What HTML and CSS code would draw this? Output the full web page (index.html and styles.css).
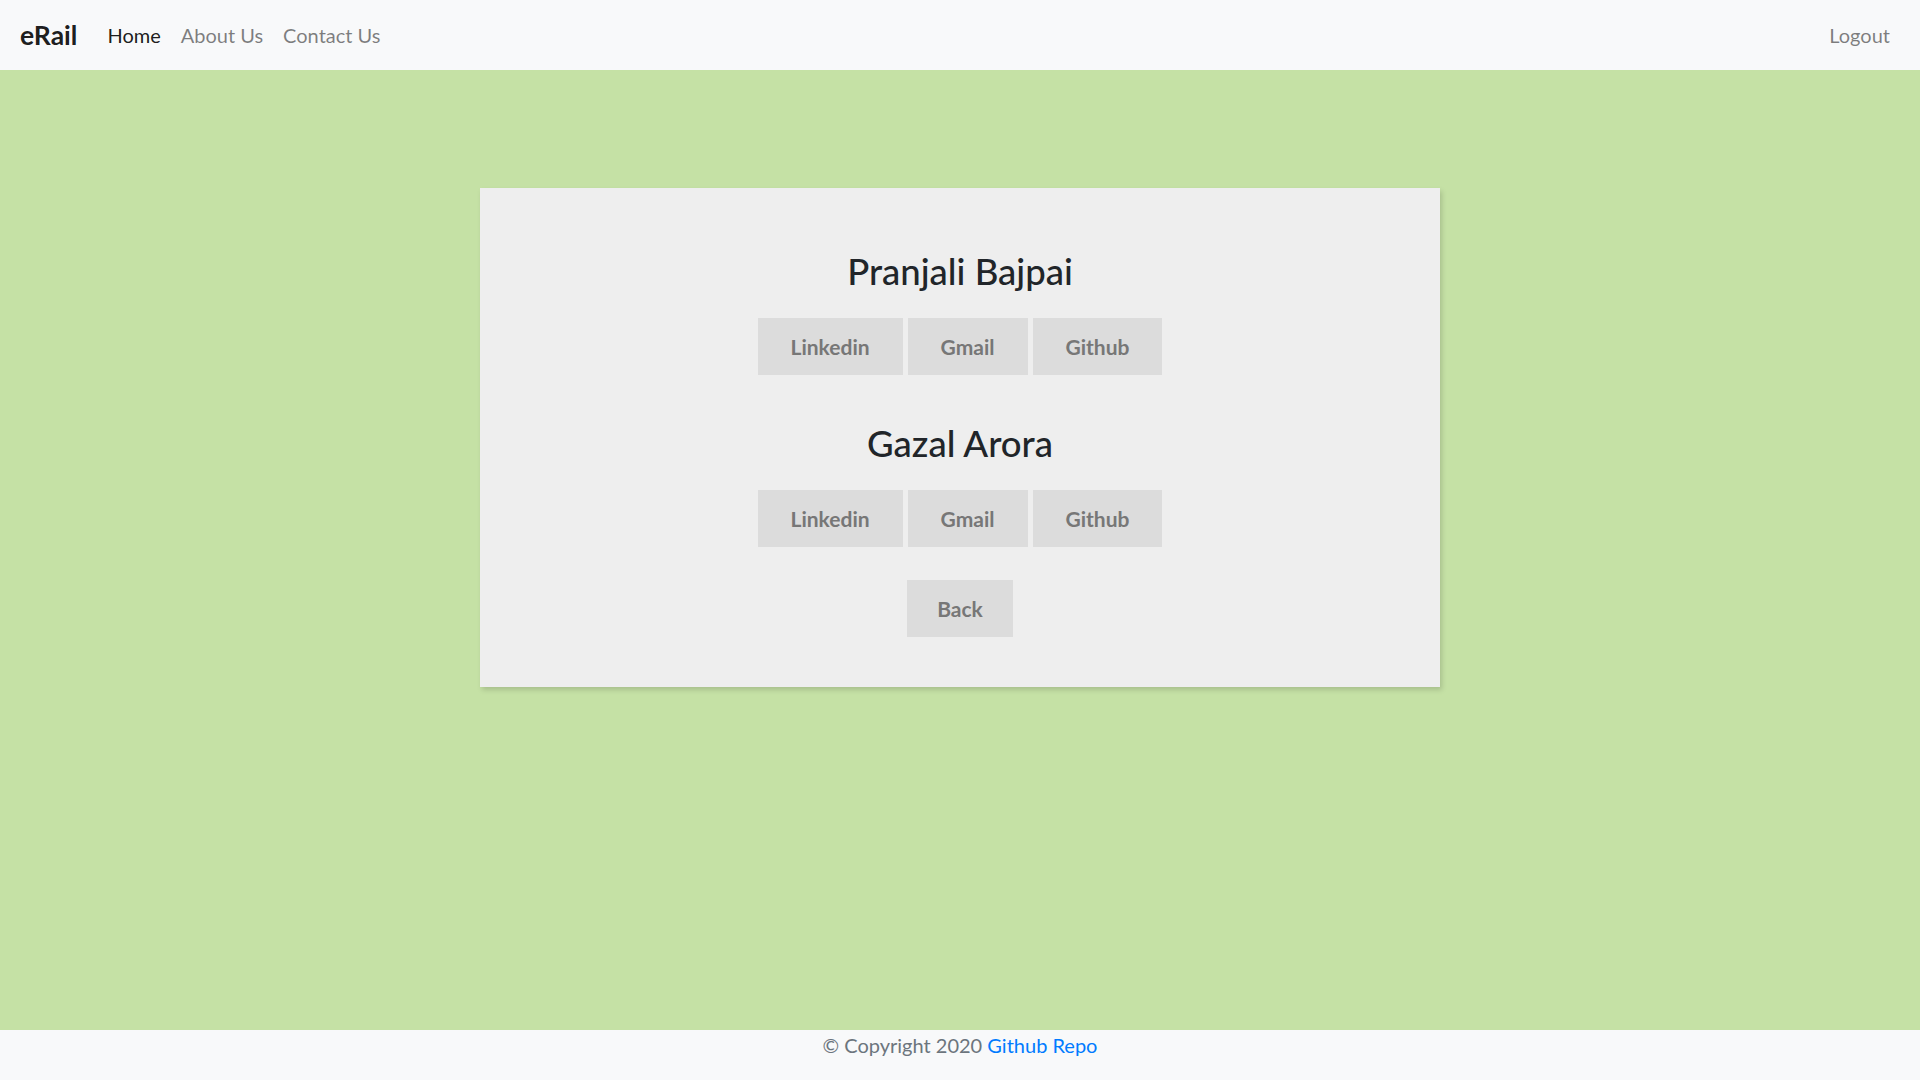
FILE: index.html
```html
<!DOCTYPE html>
<html lang="en">
<head>
<meta charset="utf-8">
<title>eRail - Contact Us</title>
<link rel="stylesheet" href="styles.css">
</head>
<body>
<nav class="navbar">
  <a class="brand" href="#">eRail</a>
  <ul class="nav-links">
    <li><a class="nav-link active" href="#">Home</a></li>
    <li><a class="nav-link" href="#">About Us</a></li>
    <li><a class="nav-link" href="#">Contact Us</a></li>
  </ul>
  <a class="nav-link logout" href="#">Logout</a>
</nav>
<main class="main">
  <section class="card">
    <h3 class="person">Pranjali Bajpai</h3>
    <div class="btn-row">
      <a class="btn" href="#">Linkedin</a>
      <a class="btn" href="#">Gmail</a>
      <a class="btn" href="#">Github</a>
    </div>
    <h3 class="person second">Gazal Arora</h3>
    <div class="btn-row">
      <a class="btn" href="#">Linkedin</a>
      <a class="btn" href="#">Gmail</a>
      <a class="btn" href="#">Github</a>
    </div>
    <div class="back-row">
      <a class="btn btn-back" href="#">Back</a>
    </div>
  </section>
</main>
<footer class="footer">
  <span>© Copyright 2020 <a class="repo" href="#">Github Repo</a></span>
</footer>
</body>
</html>
```
FILE: styles.css
```css
* { box-sizing: border-box; }
html, body { margin: 0; padding: 0; }
body {
  font-family: Lato, "Open Sans", sans-serif;
  font-size: 20px;
  color: #212529;
  min-height: 100vh;
  display: flex;
  flex-direction: column;
  background: #c5e1a5;
}
a { text-decoration: none; }

.navbar {
  height: 70px;
  background: #f8f9fa;
  display: flex;
  align-items: center;
  padding: 0 20px;
}
.brand {
  font-size: 26.5px;
  font-weight: 700;
  color: rgba(0,0,0,0.9);
  margin-right: 20px;
}
.nav-links {
  list-style: none;
  margin: 0;
  padding: 0;
  display: flex;
  flex: 1;
}
.nav-link {
  display: block;
  padding: 0 10px;
  color: rgba(0,0,0,0.5);
  font-size: 20px;
  line-height: 30px;
}
.nav-link.active { color: rgba(0,0,0,0.9); }
.logout { padding-right: 10px; }

.main {
  flex: 1;
  display: flex;
  justify-content: center;
  align-items: flex-start;
  padding-top: 118px;
}
.card {
  width: 960px;
  height: 499px;
  background: #eeeeee;
  box-shadow: 2px 3px 5px rgba(0,0,0,0.15);
  padding-top: 62px;
  display: flex;
  flex-direction: column;
  align-items: center;
}
.person {
  margin: 0;
  font-size: 36.5px;
  font-weight: 500;
  line-height: 42px;
  color: #212529;
}
.person.second { margin-top: 47px; }
.btn-row {
  display: flex;
  gap: 5px;
  margin-top: 26px;
}
.btn {
  display: inline-flex;
  align-items: center;
  justify-content: center;
  height: 57px;
  padding: 0 33px;
  background: #dcdcdc;
  color: #777777;
  font-weight: 700;
  font-size: 21px;
}
.btn-back { padding: 0 30px; }
.back-row { margin-top: 33px; }

.footer {
  height: 50px;
  background: #f8f9fa;
  text-align: center;
  color: #6c757d;
  font-size: 20px;
  line-height: 30px;
}
.repo { color: #007bff; }
```
